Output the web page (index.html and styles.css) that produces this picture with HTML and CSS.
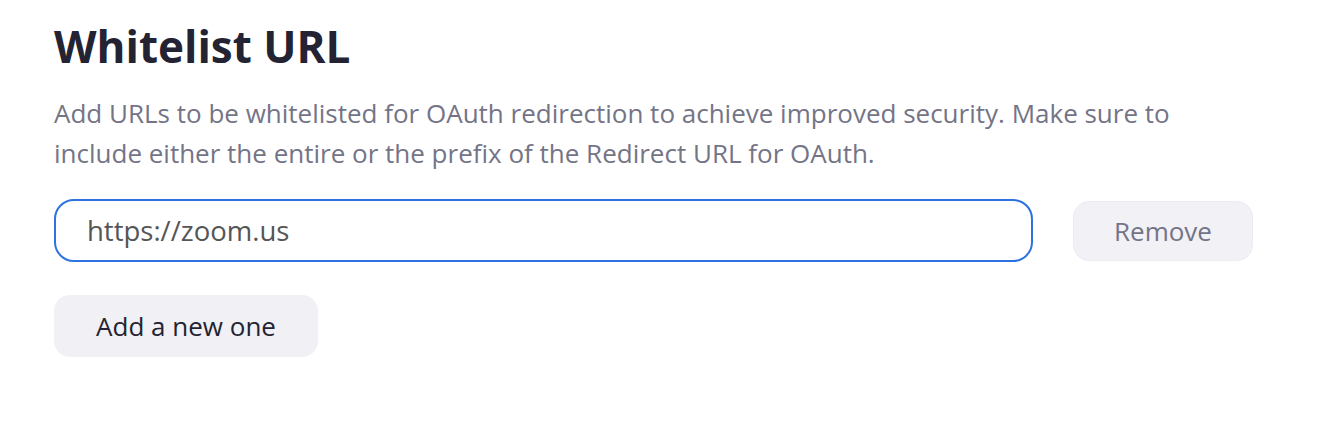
FILE: index.html
```html
<!DOCTYPE html>
<html lang="en">
<head>
<meta charset="utf-8">
<title>Whitelist URL</title>
<link rel="stylesheet" href="styles.css">
</head>
<body>
<section class="panel">
  <h1 class="title">Whitelist URL</h1>
  <p class="desc">Add URLs to be whitelisted for OAuth redirection to achieve improved security. Make sure to include either the entire or the prefix of the Redirect URL for OAuth.</p>
  <div class="row">
    <input class="url-input" type="text" value="https://zoom.us">
    <button class="btn btn-remove" type="button">Remove</button>
  </div>
  <button class="btn btn-add" type="button">Add a new one</button>
</section>
</body>
</html>
```

FILE: styles.css
```css
html, body {
  margin: 0;
  padding: 0;
  background: #ffffff;
}
body {
  font-family: "Open Sans", "Noto Sans", sans-serif;
}
.panel {
  padding: 17px 0 0 54px;
  width: 1200px;
}
.title {
  margin: 0;
  font-size: 44px;
  font-weight: 700;
  line-height: 58px;
  color: #232333;
}
.desc {
  margin: 18px 0 0 0;
  width: 1150px;
  font-size: 26px;
  line-height: 40px;
  color: #747487;
}
.row {
  display: flex;
  align-items: center;
  gap: 40px;
  margin-top: 26px;
}
.url-input {
  box-sizing: border-box;
  flex: 0 0 979px;
  width: 979px;
  height: 63px;
  border: 2px solid #2d72e0;
  border-radius: 20px;
  padding: 0 31px;
  font-family: inherit;
  font-size: 27.5px;
  color: #555555;
  background: #fff;
  outline: none;
}
.btn {
  font-family: inherit;
  border-radius: 16px;
  cursor: pointer;
}
.btn-remove {
  box-sizing: border-box;
  flex: 0 0 180px;
  width: 180px;
  height: 60px;
  border: 1px solid #ececf2;
  background: #f1f1f6;
  color: #747487;
  font-size: 26px;
}
.btn-add {
  box-sizing: border-box;
  margin-top: 33px;
  width: 264px;
  height: 62px;
  border: none;
  background: #f0f0f5;
  color: #232333;
  font-size: 26px;
}
```
